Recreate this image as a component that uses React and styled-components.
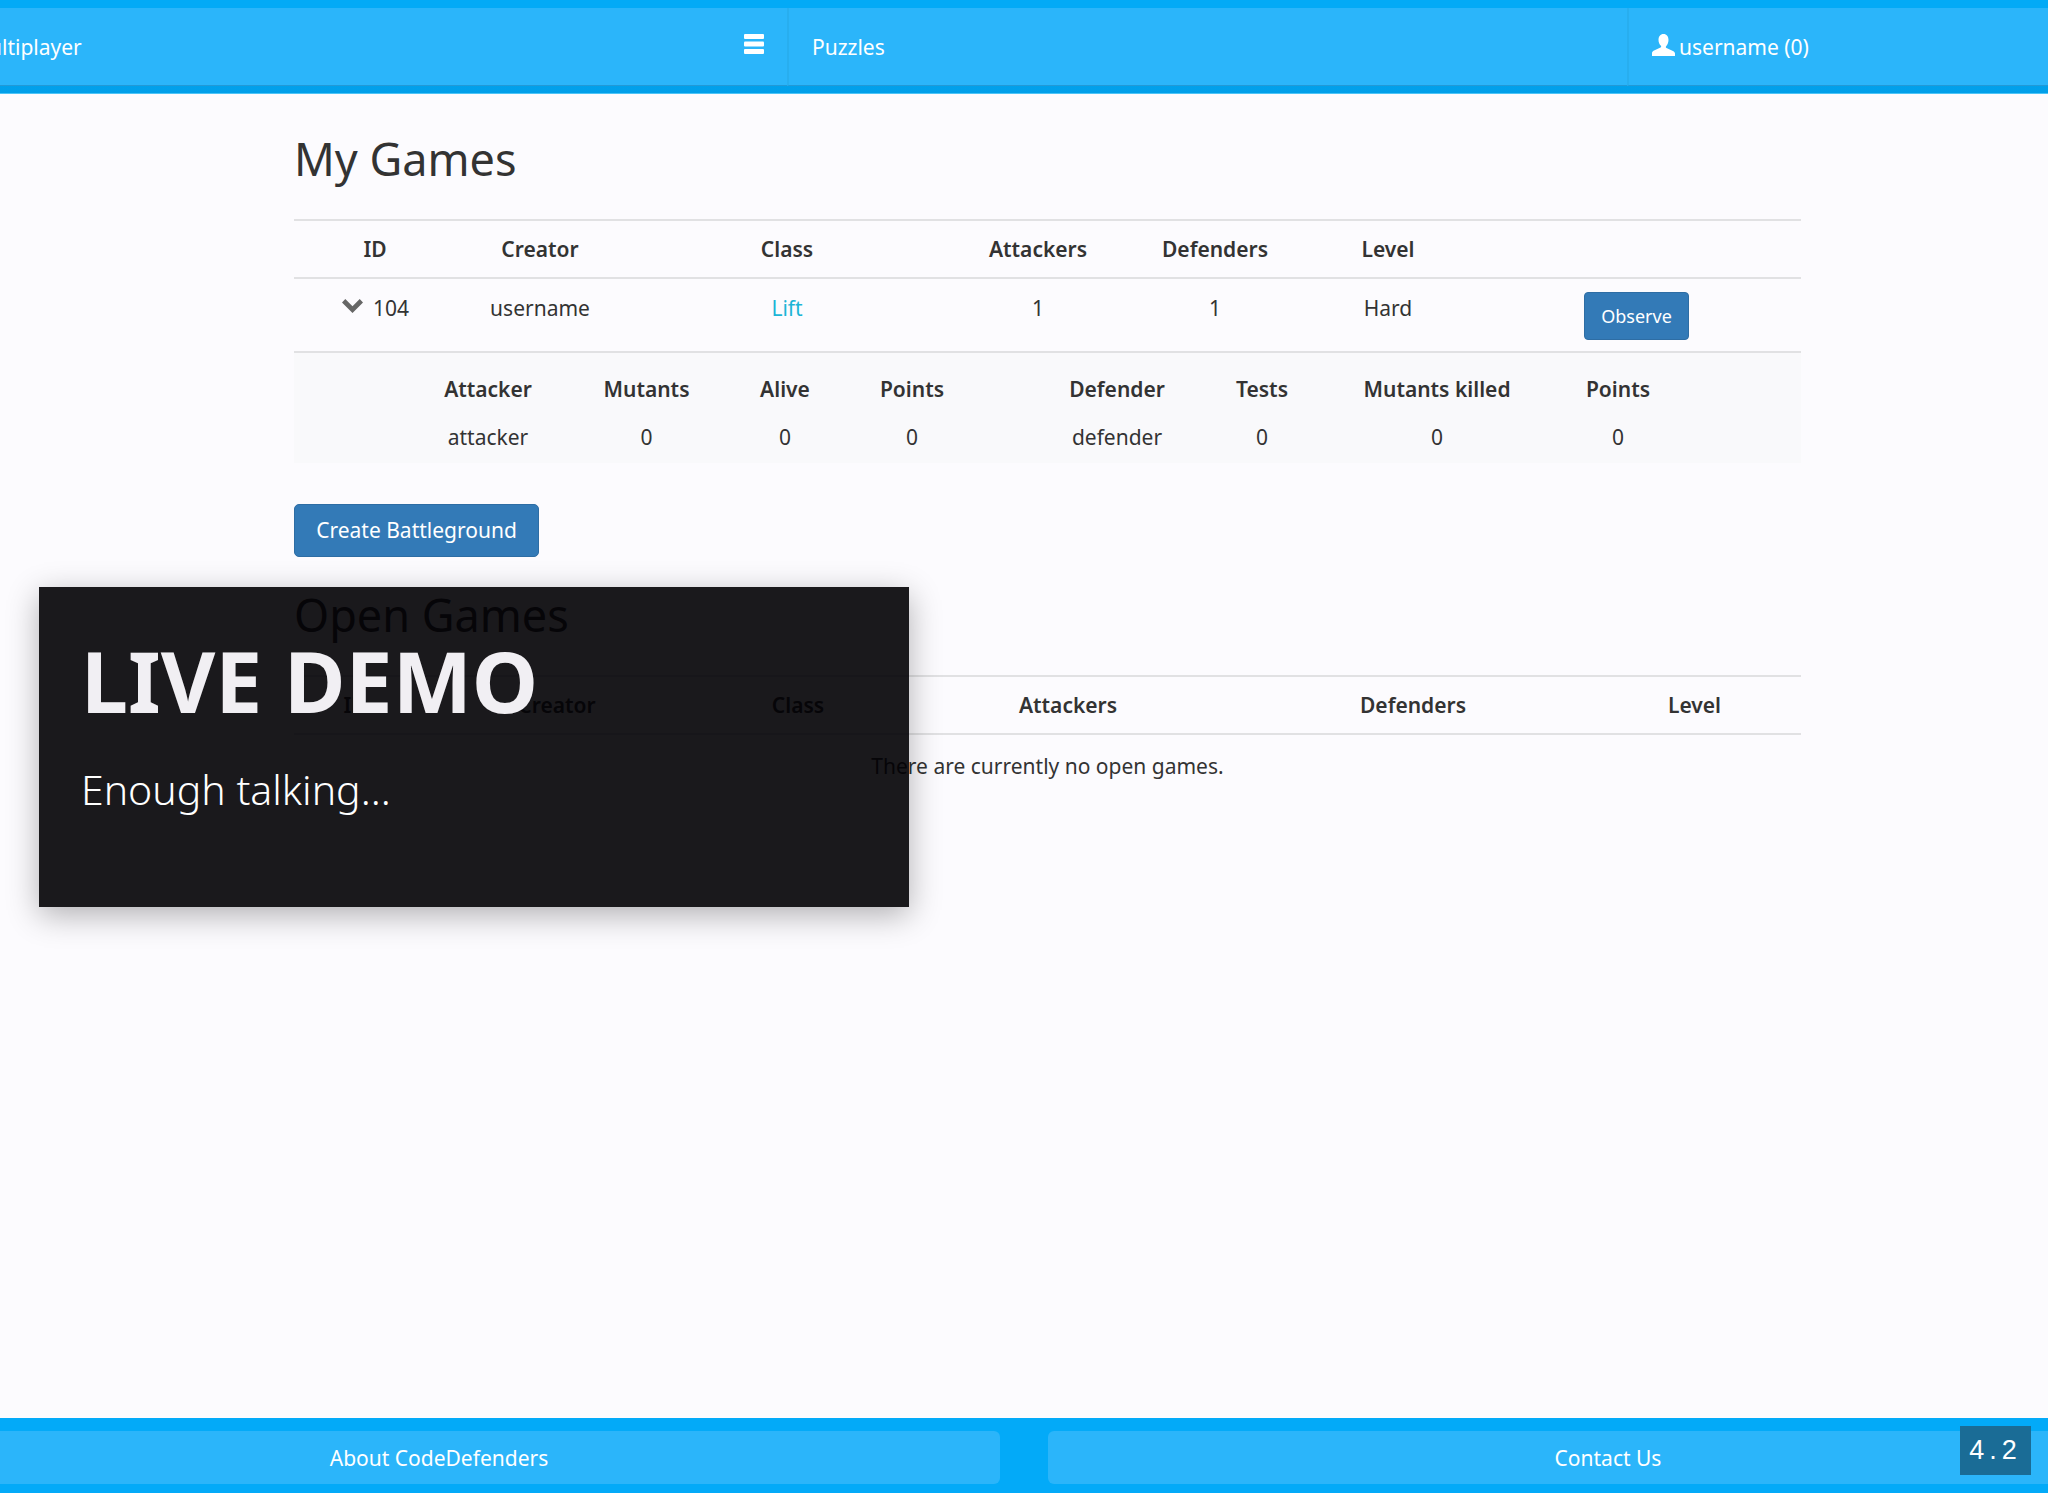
import React from 'react';
import styled, { createGlobalStyle } from 'styled-components';

const GlobalStyle = createGlobalStyle`
  html, body {
    margin: 0;
    padding: 0;
    background: #fcfbfe;
    overflow: hidden;
  }
  body {
    font-family: 'Noto Sans', 'Open Sans', sans-serif;
    font-size: 21px;
    color: #333;
  }
`;

const gamesColumns = '162px 168px 326px 176px 178px 168px 1fr';
const openColumns = '122px 282px 200px 340px 350px 1fr';
const playerColumns = '116px 156px 161px 116px 138px 59px 154px 136px 214px 148px 1fr';

const HamburgerIcon = () => (
  <svg width="20" height="20" viewBox="0 0 20 20" fill="#fff">
    <rect x="0" y="0" width="20" height="5" rx="1" />
    <rect x="0" y="7.5" width="20" height="5" rx="1" />
    <rect x="0" y="15" width="20" height="5" rx="1" />
  </svg>
);

const UserIcon = () => (
  <svg width="23" height="22" viewBox="0 0 23 22" fill="#fff">
    <path d="M11.5 0c3.2 0 5 2.6 5 5.8 0 2.6-1 5-2.4 6.4-.5.6-.3 1.5.4 1.9l5.9 2.6c1.6.7 2.6 1.6 2.6 2.8V22H0v-3c0-1.2 1-2.1 2.6-2.8l5.9-2.6c.7-.4.9-1.3.4-1.9C7.5 10.8 6.5 8.400 6.500 5.800 6.500 2.600 8.300 0 11.500 0z" />
  </svg>
);

const ChevronIcon = () => (
  <svg width="21" height="14" viewBox="0 0 21 14" fill="#666">
    <path d="M0 3.500 3.300 0l7.200 7.200L17.700 0 21 3.500 10.500 14z" />
  </svg>
);

const App = () => (
  <Page>
    <GlobalStyle />
    <Nav>
      <NavCell>
        <CutLabel>Multiplayer</CutLabel>
        <MenuButton>
          <HamburgerIcon />
        </MenuButton>
      </NavCell>
      <NavCell>
        <NavLabel>Puzzles</NavLabel>
      </NavCell>
      <NavCell>
        <UserLabel>
          <UserIcon />
          username (0)
        </UserLabel>
      </NavCell>
    </Nav>

    <Main>
      <Heading>My Games</Heading>
      <Table>
        <HeadRow $columns={gamesColumns}>
          <span>ID</span>
          <span>Creator</span>
          <span>Class</span>
          <span>Attackers</span>
          <span>Defenders</span>
          <span>Level</span>
          <span />
        </HeadRow>
        <GameRow $columns={gamesColumns}>
          <IdCell>
            <ChevronIcon />
            104
          </IdCell>
          <span>username</span>
          <ClassLink>Lift</ClassLink>
          <span>1</span>
          <span>1</span>
          <span>Hard</span>
          <ObserveCell>
            <ObserveButton>Observe</ObserveButton>
          </ObserveCell>
        </GameRow>
        <Players>
          <PlayerHead $columns={playerColumns}>
            <span />
            <span>Attacker</span>
            <span>Mutants</span>
            <span>Alive</span>
            <span>Points</span>
            <span />
            <span>Defender</span>
            <span>Tests</span>
            <span>Mutants killed</span>
            <span>Points</span>
          </PlayerHead>
          <PlayerRow $columns={playerColumns}>
            <span />
            <span>attacker</span>
            <span>0</span>
            <span>0</span>
            <span>0</span>
            <span />
            <span>defender</span>
            <span>0</span>
            <span>0</span>
            <span>0</span>
          </PlayerRow>
        </Players>
      </Table>

      <CreateButton>Create Battleground</CreateButton>

      <Heading>Open Games</Heading>
      <Table>
        <HeadRow $columns={openColumns}>
          <span>ID</span>
          <span>Creator</span>
          <span>Class</span>
          <span>Attackers</span>
          <span>Defenders</span>
          <span>Level</span>
        </HeadRow>
        <EmptyRow>There are currently no open games.</EmptyRow>
      </Table>
    </Main>

    <Footer>
      <FooterLink>About CodeDefenders</FooterLink>
      <FooterLink>Contact Us</FooterLink>
    </Footer>

    <VersionBadge>4.2</VersionBadge>

    <DemoOverlay>
      <DemoTitle>LIVE DEMO</DemoTitle>
      <DemoText>Enough talking...</DemoText>
    </DemoOverlay>
  </Page>
);

export default App;

const Page = styled.div`
  position: relative;
  display: flex;
  flex-direction: column;
  height: 1493px;
  overflow: hidden;
`;

const Nav = styled.nav`
  flex: none;
  display: grid;
  grid-template-columns: 787px 840px 1fr;
  height: 94px;
  box-sizing: border-box;
  padding: 8px 0 7px;
  background: linear-gradient(180deg, #03aaf6 0%, #03aaf6 50%, #019fe9 100%);
  border-bottom: 1px solid #4cc4f7;
`;

const NavCell = styled.div`
  display: flex;
  align-items: center;
  justify-content: space-between;
  background: #2bb5fa;
  color: #fff;
  font-size: 21px;
  border-left: 2px solid #28aeef;
  border-bottom: 1px solid #2299d6;
  overflow: hidden;

  &:first-child {
    border-left: none;
  }
`;

const NavLabel = styled.span`
  margin-left: 23px;
`;

const CutLabel = styled.span`
  margin-left: -30px;
`;

const MenuButton = styled.span`
  display: flex;
  margin-right: 23px;
  margin-top: -6px;
`;

const UserLabel = styled.span`
  display: flex;
  align-items: center;
  gap: 4px;
  margin-left: 23px;

  svg {
    margin-top: -4px;
  }
`;

const Main = styled.main`
  flex: 1;
  padding: 40px 247px 0 294px;
`;

const Heading = styled.h2`
  margin: 0 0 35px;
  font-size: 45px;
  line-height: 50px;
  font-weight: 400;
  color: #333;
`;

const Table = styled.div`
  border-top: 2px solid #e1e1e3;
`;

const HeadRow = styled.div`
  display: grid;
  grid-template-columns: ${(p) => p.$columns};
  align-items: center;
  height: 56px;
  border-bottom: 2px solid #e1e1e3;
  font-weight: 600;
  text-align: center;
`;

const GameRow = styled.div`
  display: grid;
  grid-template-columns: ${(p) => p.$columns};
  height: 72px;
  padding-top: 14px;
  box-sizing: content-box;
  height: 58px;
  border-bottom: 2px solid #e1e1e3;
  text-align: center;
  line-height: 30px;
`;

const IdCell = styled.span`
  display: flex;
  align-items: center;
  justify-content: flex-end;
  gap: 10px;
  height: 30px;
  padding-right: 47px;

  svg {
    margin-top: -4px;
  }
`;

const ClassLink = styled.span`
  color: #1cb5d6;
`;

const ObserveCell = styled.span`
  display: flex;
  justify-content: center;
  margin-top: -1px;
`;

const ObserveButton = styled.button`
  all: unset;
  width: 105px;
  height: 48px;
  box-sizing: border-box;
  border-radius: 4px;
  background: #337ab7;
  border: 1px solid #2e6da4;
  color: #fff;
  font-family: inherit;
  font-size: 18px;
  line-height: 46px;
  text-align: center;
`;

const Players = styled.div`
  height: 110px;
  background: #f9f9fb;
`;

const PlayerHead = styled.div`
  display: grid;
  grid-template-columns: ${(p) => p.$columns};
  align-items: center;
  height: 48px;
  padding-top: 12px;
  font-weight: 600;
  text-align: center;
`;

const PlayerRow = styled.div`
  display: grid;
  grid-template-columns: ${(p) => p.$columns};
  align-items: center;
  height: 48px;
  text-align: center;
`;

const CreateButton = styled.button`
  all: unset;
  display: block;
  width: 245px;
  height: 53px;
  box-sizing: border-box;
  margin: 41px 0 33px;
  border-radius: 5px;
  background: #337ab7;
  border: 1px solid #2e6da4;
  color: #fff;
  font-family: inherit;
  font-size: 21px;
  line-height: 51px;
  text-align: center;
`;

const EmptyRow = styled.div`
  padding-top: 16px;
  line-height: 30px;
  text-align: center;
`;

const Footer = styled.footer`
  flex: none;
  display: grid;
  grid-template-columns: 1122px 1120px;
  justify-content: space-between;
  width: 2290px;
  height: 75px;
  box-sizing: border-box;
  margin-left: -122px;
  padding: 13px 0 9px;
  background: #03aaf8;
`;

const FooterLink = styled.div`
  display: flex;
  align-items: center;
  justify-content: center;
  background: #2bb5fa;
  border-radius: 6px;
  color: #fff;
  font-size: 21px;
`;

const VersionBadge = styled.div`
  position: absolute;
  left: 1960px;
  top: 1426px;
  width: 71px;
  height: 49px;
  background: #1a6c96;
  color: #fff;
  font-family: 'Liberation Sans', sans-serif;
  font-size: 27px;
  line-height: 49px;
  letter-spacing: 5px;
  text-align: center;
`;

const DemoOverlay = styled.aside`
  position: absolute;
  left: 39px;
  top: 587px;
  width: 870px;
  height: 320px;
  box-sizing: border-box;
  padding: 44px 42px;
  background: rgba(1, 0, 3, 0.9);
  box-shadow: 0 8px 30px rgba(0, 0, 0, 0.3);
`;

const DemoTitle = styled.h1`
  margin: 0;
  font-size: 84px;
  line-height: 100px;
  font-weight: 700;
  color: #f1eff3;
`;

const DemoText = styled.p`
  margin: 30px 0 0;
  font-size: 41px;
  line-height: 56px;
  font-weight: 300;
  color: #fff;
`;
